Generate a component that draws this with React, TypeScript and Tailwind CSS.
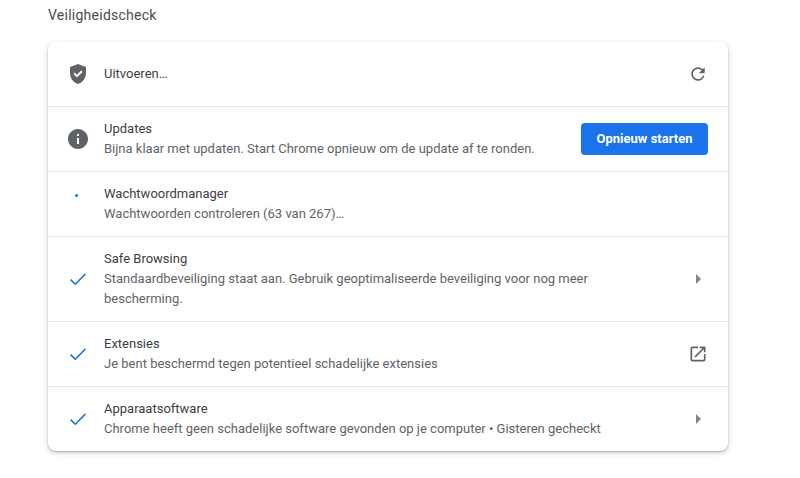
function ShieldIcon() {
  return (
    <svg width="24" height="24" viewBox="0 0 24 24" className="fill-[#5f6368]">
      <path d="M12 2 4 5v6.09c0 5.05 3.41 9.76 8 10.91 4.59-1.15 8-5.86 8-10.91V5l-8-3zm-1.06 13.54-3.54-3.54 1.41-1.41 2.12 2.12 4.24-4.24 1.41 1.41-5.64 5.66z" />
    </svg>
  );
}

function InfoIcon() {
  return (
    <svg width="24" height="24" viewBox="0 0 24 24" className="fill-[#5f6368]">
      <path d="M12 2C6.48 2 2 6.48 2 12s4.48 10 10 10 10-4.48 10-10S17.52 2 12 2zm1 15h-2v-6h2v6zm0-8h-2V7h2v2z" />
    </svg>
  );
}

function CheckIcon() {
  return (
    <svg width="24" height="24" viewBox="0 0 24 24" className="fill-none stroke-[#1b6cd4] stroke-[1.6]">
      <path d="M4.6 12.6 9.3 17.2 19.4 7" />
    </svg>
  );
}

// spinner frame: only a dot of it shows, above the row's centre
function DotIcon() {
  return (
    <div className="flex h-6 w-6 items-center justify-center pr-1 pb-[18px]">
      <div className="h-[3px] w-[3px] rounded-full bg-[#1a73e8]" />
    </div>
  );
}

function RefreshIcon() {
  return (
    <svg width="20" height="20" viewBox="0 0 24 24" className="fill-[#5f6368]">
      <path d="M17.65 6.35A7.958 7.958 0 0 0 12 4c-4.42 0-7.99 3.58-7.99 8s3.57 8 7.99 8c3.73 0 6.84-2.55 7.73-6h-2.08A5.99 5.99 0 0 1 12 18c-3.31 0-6-2.69-6-6s2.69-6 6-6c1.66 0 3.14.69 4.22 1.78L13 11h7V4l-2.35 2.35z" />
    </svg>
  );
}

function ExternalIcon() {
  return (
    <svg width="20" height="20" viewBox="0 0 24 24" className="fill-[#5f6368]">
      <path d="M19 19H5V5h7V3H5a2 2 0 0 0-2 2v14a2 2 0 0 0 2 2h14c1.1 0 2-.9 2-2v-7h-2v7zM14 3v2h3.59l-9.83 9.83 1.41 1.41L19 6.41V10h2V3h-7z" />
    </svg>
  );
}

function Arrow() {
  return <div className="h-0 w-0 border-y-[5px] border-l-[5px] border-y-transparent border-l-[#80868b]" />;
}

type RowProps = {
  icon: React.ReactNode;
  title: string;
  sub?: string;
  action?: React.ReactNode;
  first?: boolean;
  tall?: boolean;
};

function Row({ icon, title, sub, action, first, tall }: RowProps) {
  return (
    <div
      className={`flex items-center pl-[18px] pr-5 ${tall ? "h-[85px]" : first ? "h-16" : "h-[65px]"} ${
        first ? "" : "border-t border-[#e8e9eb]"
      }`}
    >
      <div className="mr-[14px] flex w-6 justify-center">{icon}</div>
      <div className="min-w-0 flex-1 pr-[72px]">
        <div className="text-[13px] leading-5 text-[#3c4043]">{title}</div>
        {sub && <div className="text-[13px] leading-5 text-[#5f6368]">{sub}</div>}
      </div>
      {action}
    </div>
  );
}

export default function App() {
  return (
    <div className="h-[478px] w-[800px] overflow-hidden bg-white pl-12 pt-[6px] font-['Roboto',sans-serif]">
      <h2 className="mb-[17px] text-sm font-normal leading-[19px] tracking-[0.25px] text-[#4a4d51]">Veiligheidscheck</h2>
      <div className="w-[680px] rounded-lg bg-white shadow-[0_1px_2px_0_rgba(60,64,67,0.35),0_2px_5px_1px_rgba(60,64,67,0.15)]">
        <Row
          first
          icon={<ShieldIcon />}
          title="Uitvoeren…"
          action={
            <div className="flex w-5 justify-center">
              <RefreshIcon />
            </div>
          }
        />
        <div className="relative">
          <Row icon={<InfoIcon />} title="Updates" sub="Bijna klaar met updaten. Start Chrome opnieuw om de update af te ronden." />
          <button className="absolute right-5 top-[17px] flex h-8 w-[127px] items-center justify-center rounded bg-[#1a73e8] text-[13px] font-bold text-white">
            Opnieuw starten
          </button>
        </div>
        <Row icon={<DotIcon />} title="Wachtwoordmanager" sub="Wachtwoorden controleren (63 van 267)…" />
        <Row
          tall
          icon={<CheckIcon />}
          title="Safe Browsing"
          sub="Standaardbeveiliging staat aan. Gebruik geoptimaliseerde beveiliging voor nog meer bescherming."
          action={
            <div className="flex w-5 justify-center">
              <Arrow />
            </div>
          }
        />
        <Row
          icon={<CheckIcon />}
          title="Extensies"
          sub="Je bent beschermd tegen potentieel schadelijke extensies"
          action={
            <div className="flex w-5 justify-center">
              <ExternalIcon />
            </div>
          }
        />
        <Row
          icon={<CheckIcon />}
          title="Apparaatsoftware"
          sub="Chrome heeft geen schadelijke software gevonden op je computer • Gisteren gecheckt"
          action={
            <div className="flex w-5 justify-center">
              <Arrow />
            </div>
          }
        />
      </div>
    </div>
  );
}
